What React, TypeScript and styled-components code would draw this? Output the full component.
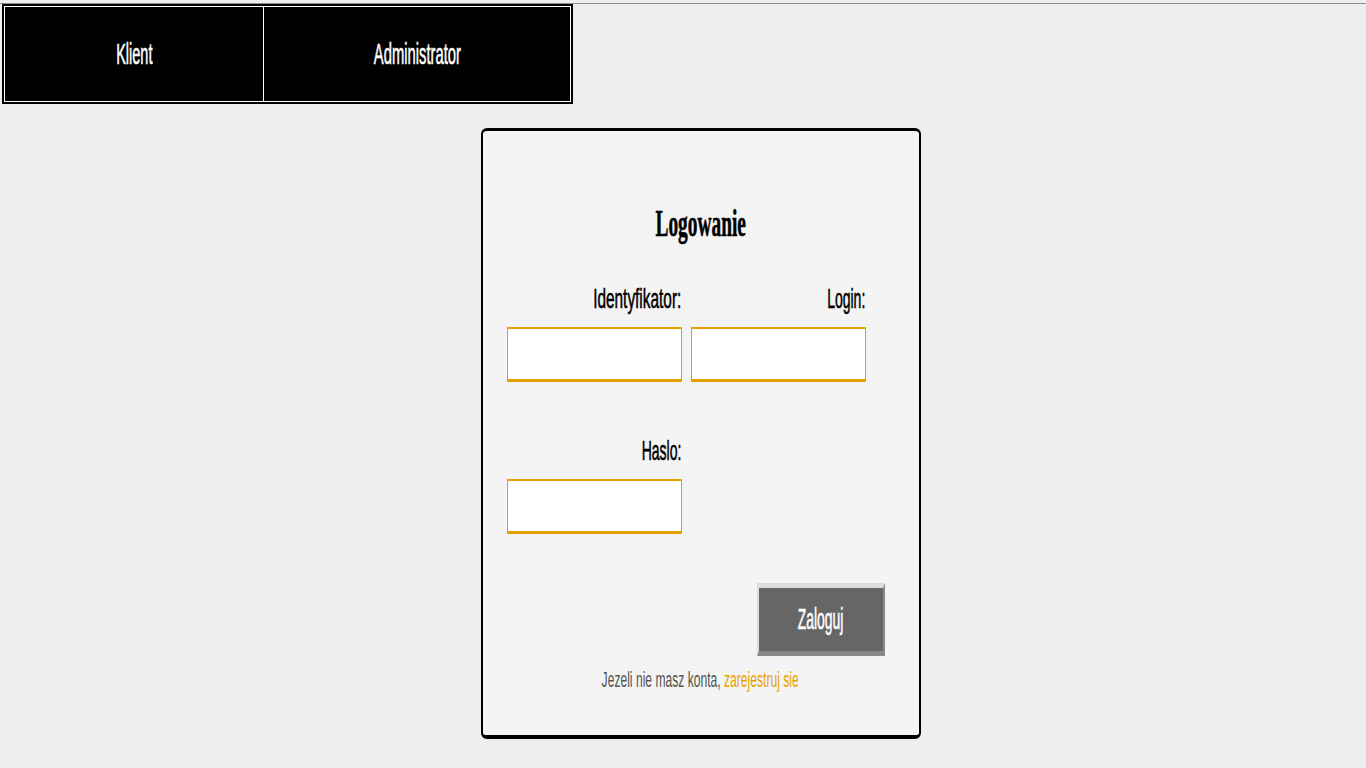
import React from "react";
import styled, { createGlobalStyle } from "styled-components";

const GlobalStyle = createGlobalStyle`
  html, body {
    margin: 0;
    padding: 0;
    background: #eeeeee;
  }
  body {
    font-family: "Liberation Sans", Arial, sans-serif;
  }
`;

const colors = {
  page: "#eeeeee",
  card: "#f4f4f4",
  accent: "#e6a100",
  text: "#000000",
  muted: "#555555",
  button: "#666666",
};

const Page = styled.div`
  min-height: 768px;
  padding-top: 3px;
  box-sizing: border-box;
`;

const TopRule = styled.div`
  height: 1px;
  background: #8a8a8a;
`;

const Nav = styled.nav`
  display: flex;
  width: 571px;
  height: 100px;
  margin-left: 2px;
  padding: 2px;
  box-sizing: border-box;
  background: #000;
`;

const NavInner = styled.div`
  display: flex;
  flex: 1;
  border: 1px solid #fff;
`;

const NavCell = styled.a<{ $width?: number }>`
  display: flex;
  align-items: center;
  justify-content: center;
  flex: ${p => (p.$width ? `0 0 ${p.$width}px` : "1")};
  background: #000;
  color: #fff;
  font-size: 29px;
  text-decoration: none;
  cursor: pointer;

  & + & {
    border-left: 1px solid #fff;
  }
`;

// the screenshot renders every text squeezed horizontally
const Squish = styled.span<{ $sx: number; $origin?: string; $stroke?: number }>`
  display: inline-block;
  white-space: nowrap;
  -webkit-text-stroke: ${p => (p.$stroke ?? 0.6)}px currentColor;
  transform: scaleX(${p => p.$sx});
  transform-origin: ${p => p.$origin || "center"};
`;

const Main = styled.main`
  display: flex;
  justify-content: center;
  padding-left: 35px;
  margin-top: 24px;
`;

const Card = styled.section`
  width: 440px;
  height: 611px;
  box-sizing: border-box;
  background: ${colors.card};
  border: 2px solid #000;
  border-top-width: 3px;
  border-bottom-width: 4px;
  border-radius: 6px;
  padding-top: 72px;
`;

const Title = styled.h1`
  margin: 0;
  text-align: center;
  font-family: "Liberation Serif", "Times New Roman", serif;
  font-size: 38px;
  line-height: 40px;
  font-weight: bold;
  color: ${colors.text};
`;

const FieldGrid = styled.div`
  display: grid;
  grid-template-columns: 175px 175px;
  column-gap: 9px;
  row-gap: 53px;
  padding-left: 24px;
  margin-top: 40px;
`;

const Field = styled.div`
  display: flex;
  flex-direction: column;
`;

const Label = styled.label`
  display: block;
  text-align: right;
  font-size: 28px;
  line-height: 32px;
  color: ${colors.text};
  margin-bottom: 12px;
`;

const Input = styled.input`
  width: 175px;
  height: 55px;
  box-sizing: border-box;
  background: #fff;
  border: 1px solid ${colors.accent};
  border-top-width: 2px;
  border-bottom-width: 3px;
  outline: none;
  padding: 0 8px;
  font-size: 16px;
`;

const ButtonRow = styled.div`
  display: flex;
  justify-content: flex-end;
  padding-right: 34px;
  margin-top: 49px;
`;

const Button = styled.button`
  width: 128px;
  height: 73px;
  box-sizing: border-box;
  background: ${colors.button};
  color: #fff;
  font-family: "Liberation Sans", Arial, sans-serif;
  font-size: 29px;
  border-style: solid;
  border-width: 5px 2px 5px 2px;
  border-color: #dddddd #888888 #888888 #dddddd;
  padding: 0;
  cursor: pointer;
`;

const Footer = styled.p`
  margin: 11px 0 0;
  text-align: center;
  font-size: 22px;
  line-height: 26px;
  color: ${colors.muted};
`;

const Link = styled.a`
  color: ${colors.accent};
  text-decoration: none;
`;

function App() {
  return (
    <Page>
      <GlobalStyle />
      <TopRule />
      <Nav>
        <NavInner>
          <NavCell $width={258}>
            <Squish $sx={0.5}>Klient</Squish>
          </NavCell>
          <NavCell>
            <Squish $sx={0.51}>Administrator</Squish>
          </NavCell>
        </NavInner>
      </Nav>
      <Main>
        <Card>
          <Title>
            <Squish $sx={0.51}>Logowanie</Squish>
          </Title>
          <FieldGrid>
            <Field>
              <Label htmlFor="ident">
                <Squish $sx={0.55} $origin="right">
                  Identyfikator:
                </Squish>
              </Label>
              <Input id="ident" type="text" />
            </Field>
            <Field>
              <Label htmlFor="login">
                <Squish $sx={0.5} $origin="right">
                  Login:
                </Squish>
              </Label>
              <Input id="login" type="text" />
            </Field>
            <Field>
              <Label htmlFor="haslo">
                <Squish $sx={0.5} $origin="right">
                  Haslo:
                </Squish>
              </Label>
              <Input id="haslo" type="password" />
            </Field>
          </FieldGrid>
          <ButtonRow>
            <Button type="button">
              <Squish $sx={0.48}>Zaloguj</Squish>
            </Button>
          </ButtonRow>
          <Footer>
            <Squish $sx={0.55} $stroke={0}>
              Jezeli nie masz konta, <Link href="#">zarejestruj sie</Link>
            </Squish>
          </Footer>
        </Card>
      </Main>
    </Page>
  );
}

export default App;
